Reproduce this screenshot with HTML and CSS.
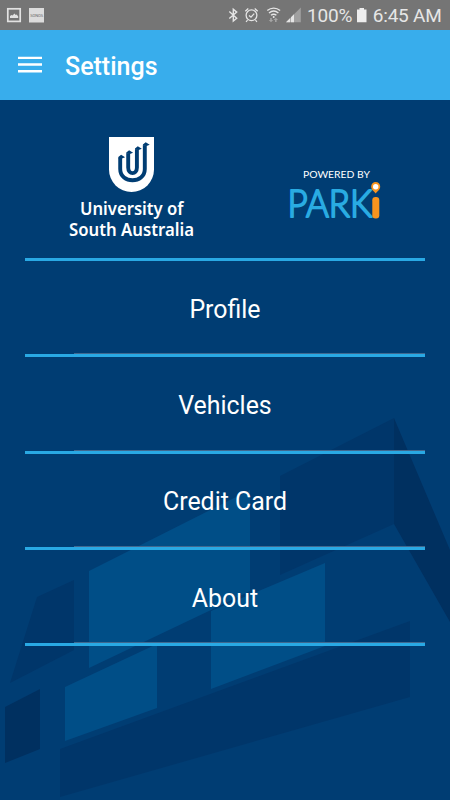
FILE: index.html
```
<!DOCTYPE html>
<html lang="en">
<head>
<meta charset="utf-8">
<title>Settings</title>
<link rel="stylesheet" href="styles.css">
</head>
<body>
<div class="status">
  <svg class="status-left" width="50" height="30" viewBox="0 0 50 30">
    <rect x="7.8" y="8.8" width="12.4" height="12.6" fill="none" stroke="#e2e2e2" stroke-width="1.7"/>
    <path d="M10 18v-2l1.5-1 1 .6 2-2 1.2 1.3 1-.5 1.5 2V18z" fill="#e2e2e2"/>
    <rect x="29" y="8" width="15" height="14.5" fill="#dcdcdc"/>
    <text x="30.2" y="16.6" textLength="12.8" class="tiny">SONOS</text>
  </svg>
  <div class="status-right">
    <svg width="75" height="30" viewBox="228 0 75 30">
      <path d="M229.3 11.6l7.4 6.6-3.4 2.9V9.2l3.4 2.9-7.4 6.4" fill="none" stroke="#e5e5e5" stroke-width="1.4"/>
      <g fill="none" stroke="#e5e5e5" stroke-width="1.3">
        <circle cx="251.5" cy="15.3" r="5.4"/>
        <path d="M245.3 11.2l3-2.8M257.7 11.2l-3-2.8M247.5 20l-1.4 2M255.5 20l1.4 2M249 15.4l2 1.8 3.2-3.6"/>
      </g>
      <g fill="none" stroke="#e5e5e5" stroke-width="1.4">
        <path d="M267.3 10.5c3.8-3.2 9-3.2 12.8 0M269 13c2.8-2.3 6.6-2.3 9.4 0M271 15.3c1.6-1.3 3.8-1.3 5.4 0"/>
      </g>
      <circle cx="273.7" cy="17" r="1" fill="#e5e5e5"/>
      <path d="M271 22.2l-2.2-2.2h1.4v-2h1.6v2h1.4zM275.8 17.8l2.2 2.2h-1.4v2H275v-2h-1.4z" fill="#a5a5a5"/>
      <path d="M286 22.3L300.8 7.5v14.8z" fill="#a0a0a0"/>
      <path d="M286 22.3l4.2-4.2v4.2zM291 17.3l3-3v8h-3z" fill="#e5e5e5"/>
    </svg>
    <svg class="readout" width="147" height="30" viewBox="303 0 147 30">
      <text x="307" y="22.2" textLength="45.5">100%</text>
      <path d="M357 9.5h2.5V8h4.5v1.5h2.5v12.8H357z" fill="#eee"/>
      <text x="372.8" y="22.2" textLength="69">6:45 AM</text>
    </svg>
  </div>
</div>
<header class="bar">
  <svg width="24" height="18" viewBox="0 0 24 18"><path d="M0 1.9h24M0 8.5h24M0 15.3h24" stroke="#fff" stroke-width="2.4"/></svg>
  <h1>Settings</h1>
</header>
<main>
  <svg class="scene" width="450" height="700" viewBox="0 100 450 700">
    <path fill="#004e87" d="M89 571l161-81v101l-39 19-122 58zM211 611l114-48v83l-114 43zM65 687l92-43v64l-92 33z"/>
    <path fill="#00366a" d="M280 476l114-58v106l-114 51zM37 597l37-17v70l-64 33zM60 749l350-128v76L60 797z"/>
    <path fill="#003060" d="M394 418l56 132v72l-56-98zM5 707l35-18v60L5 763z"/>
  </svg>
  <div class="logos">
    <svg width="135" height="115" viewBox="64 130 135 115">
      <path d="M109 137h45v32.5a22.5 22.5 0 0 1-45 0z" fill="#fff"/>
      <g fill="none" stroke="#003d73" stroke-width="3.9">
        <path d="M120.2 158V169c0 15 24.6 15 24.6 0V145.5"/>
        <path d="M128.2 153.5V167.5c0 7.5 8.7 7.5 8.7 0V149.5"/>
      </g>
      <path fill="#003d73" d="M118.3 158.2v-1.2l2.8-2.2 4 2.4-3.2 1.2zM126.3 153.7v-1.2l2.8-2.2 4 2.4-3.2 1.2zM135 149.7v-1.2l2.8-2.2 4 2.4-3.2 1.2zM142.9 145.7v-1.2l2.8-2.2 4 2.4-3.2 1.2z"/>
      <text class="uni" x="80" y="215" textLength="103.5" lengthAdjust="spacingAndGlyphs">University of</text>
      <text class="uni" x="69" y="236" textLength="125" lengthAdjust="spacingAndGlyphs">South Australia</text>
    </svg>
    <svg width="100" height="115" viewBox="285 130 100 115">
      <text class="powered" x="303" y="178.4" textLength="67" lengthAdjust="spacingAndGlyphs">POWERED BY</text>
      <text class="park" x="287.5" y="217.3" textLength="84.5" lengthAdjust="spacingAndGlyphs">PARK</text>
      <rect x="372.3" y="197" width="7" height="21.5" rx="3.2" fill="#f7941e"/>
      <path d="M375.7 193.5c-1.3-2-4.5-3.6-4.5-7a4.5 4.5 0 0 1 9 0c0 3.4-3.2 5-4.5 7z" fill="#f7941e"/>
      <circle cx="375.7" cy="186.8" r="2.7" fill="#fff"/>
    </svg>
  </div>
  <nav>
    <a>Profile</a>
    <a>Vehicles</a>
    <a>Credit Card</a>
    <a>About</a>
  </nav>
</main>
</body>
</html>
```
FILE: styles.css
```
* { box-sizing: border-box; }
body {
  margin: 0;
  width: 450px;
  height: 800px;
  overflow: hidden;
  background: #003d73;
  color: #fff;
  font-family: Roboto, "Liberation Sans", sans-serif;
}
svg { display: block; }
.status {
  display: flex;
  justify-content: space-between;
  height: 30px;
  background: #757575;
}
.status-right { display: flex; }
.readout text { font-size: 19px; fill: #e6e6e6; }
.tiny { font-size: 4px; fill: #666; }
.bar {
  display: flex;
  align-items: center;
  gap: 23px;
  height: 70px;
  padding: 0 18px;
  background: #38adec;
}
.bar h1 {
  margin: 3px 0 0;
  font-size: 25px;
  font-weight: 500;
  line-height: 30px;
}
main { position: relative; height: 700px; }
.scene { position: absolute; top: 0; left: 0; }
.logos {
  position: relative;
  display: flex;
  justify-content: space-between;
  height: 158px;
  padding: 30px 65px 0 64px;
}
.uni { font: 600 17px "Noto Sans", "Open Sans", sans-serif; fill: #fff; }
.powered { font: 400 10.3px Lato, sans-serif; fill: #fff; }
.park {
  font: 300 37.5px Lato, sans-serif;
  fill: #29abe2;
  stroke: #29abe2;
  stroke-width: 2;
  stroke-linejoin: round;
}
nav {
  position: relative;
  margin: 0 25px;
  border-top: 3px solid #29a9e4;
}
nav a {
  position: relative;
  display: flex;
  align-items: center;
  justify-content: center;
  height: 96.3px;
  padding-top: 4.5px;
  border-bottom: 3px solid #29a9e4;
  font-size: 24.9px;
  line-height: 30px;
}
nav a::after {
  content: "";
  position: absolute;
  left: 49px;
  right: 0;
  bottom: 0;
  height: 1px;
  background: #41688f;
}
```
